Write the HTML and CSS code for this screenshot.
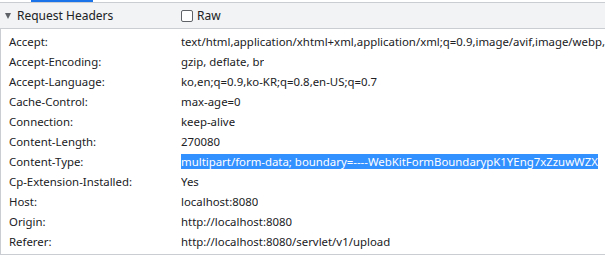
FILE: index.html
```html
<!DOCTYPE html>
<html lang="en">
<head>
  <meta charset="UTF-8" />
  <title>Request Headers</title>
  <link rel="stylesheet" href="styles.css">
</head>
<body>
  <div class="tabs"><div class="tab-active"></div></div>

  <div class="section-head">
    <div class="title"><span class="arrow"></span>Request Headers</div>
    <label class="raw"><span class="checkbox"></span>Raw</label>
  </div>

  <div class="headers">
    <div class="row"><div class="name">Accept:</div><div class="value">text/html,application/xhtml+xml,application/xml;q=0.9,image/avif,image/webp,image/apng,*/*;q=0.8</div></div>
    <div class="row"><div class="name">Accept-Encoding:</div><div class="value">gzip, deflate, br</div></div>
    <div class="row"><div class="name">Accept-Language:</div><div class="value">ko,en;q=0.9,ko-KR;q=0.8,en-US;q=0.7</div></div>
    <div class="row"><div class="name">Cache-Control:</div><div class="value">max-age=0</div></div>
    <div class="row"><div class="name">Connection:</div><div class="value">keep-alive</div></div>
    <div class="row"><div class="name">Content-Length:</div><div class="value">270080</div></div>
    <div class="row"><div class="name">Content-Type:</div><div class="value"><span class="selected">multipart/form-data; boundary=----WebKitFormBoundarypK1YEng7xZzuwWZX</span></div></div>
    <div class="row"><div class="name">Cp-Extension-Installed:</div><div class="value">Yes</div></div>
    <div class="row"><div class="name">Host:</div><div class="value">localhost:8080</div></div>
    <div class="row"><div class="name">Origin:</div><div class="value">http://localhost:8080</div></div>
    <div class="row"><div class="name">Referer:</div><div class="value">http://localhost:8080/servlet/v1/upload</div></div>
  </div>
</body>
</html>
```

FILE: styles.css
```css
body {
  margin: 0;
  font-family: "Noto Sans", "Open Sans", sans-serif;
  font-size: 11.4px;
  color: #202124;
  background: white;
  overflow: hidden;
}

.tabs {
  height: 2px;
  border-bottom: 1px solid #cacdd1;
  position: relative;
}

.tab-active {
  position: absolute;
  left: 31px;
  top: 0;
  width: 62px;
  height: 2px;
  background: #1a73e8;
}

.section-head {
  display: flex;
  align-items: center;
  height: 25px;
  background: #f1f3f4;
  border-bottom: 1px solid #cacdd1;
}

.title {
  width: 181px;
  display: flex;
  align-items: center;
  font-size: 12px;
}

.arrow {
  width: 0;
  height: 0;
  border-left: 3.5px solid transparent;
  border-right: 3.5px solid transparent;
  border-top: 6px solid #5f6368;
  margin: 1px 6px 0 5px;
}

.raw {
  display: flex;
  align-items: center;
  gap: 4px;
  font-size: 12px;
}

.checkbox {
  width: 10px;
  height: 10px;
  border: 1px solid #5f6368;
  border-radius: 2px;
  background: white;
}

.headers {
  border-left: 1px solid #cacdd1;
  border-bottom: 1px solid #cacdd1;
  padding: 2px 0 3px;
}

.row {
  display: flex;
  height: 20px;
  align-items: center;
  white-space: nowrap;
}

.name {
  width: 172px;
  padding-left: 8px;
  flex-shrink: 0;
}

.value {
  overflow: hidden;
}

.selected {
  background: #3390ff;
  color: white;
  padding: 2px 0;
}
```
